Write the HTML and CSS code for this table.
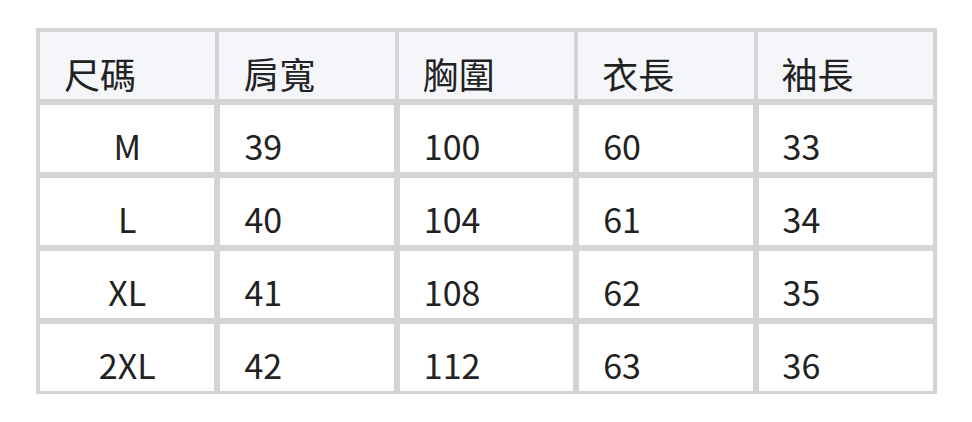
FILE: index.html
```html
<!DOCTYPE html>
<html lang="zh-Hant">
<head>
<meta charset="utf-8">
<link rel="stylesheet" href="styles.css">
</head>
<body>
<div class="size-table">
  <div class="cell head">尺碼</div>
  <div class="cell head">肩寬</div>
  <div class="cell head">胸圍</div>
  <div class="cell head">衣長</div>
  <div class="cell head">袖長</div>

  <div class="cell size">M</div>
  <div class="cell">39</div>
  <div class="cell">100</div>
  <div class="cell">60</div>
  <div class="cell last">33</div>

  <div class="cell size">L</div>
  <div class="cell">40</div>
  <div class="cell">104</div>
  <div class="cell">61</div>
  <div class="cell last">34</div>

  <div class="cell size">XL</div>
  <div class="cell">41</div>
  <div class="cell">108</div>
  <div class="cell">62</div>
  <div class="cell last">35</div>

  <div class="cell size bottom">2XL</div>
  <div class="cell bottom">42</div>
  <div class="cell bottom">112</div>
  <div class="cell bottom">63</div>
  <div class="cell last bottom">36</div>
</div>
</body>
</html>
```

FILE: styles.css
```css
html, body {
  margin: 0;
  padding: 0;
  background: #ffffff;
}

body {
  font-family: "Noto Sans CJK TC", "Noto Sans", sans-serif;
  color: #222222;
}

.size-table {
  display: grid;
  grid-template-columns: repeat(5, 1fr);
  width: 901px;
  box-sizing: border-box;
  margin: 28px 0 0 36px;
  padding: 2px 2px 1px 2px;
  background: #d4d4d4;
}

.cell {
  display: flex;
  align-items: flex-end;
  height: 67px;
  box-sizing: border-box;
  margin: 3px;
  padding: 0 0 9px 24px;
  background: #ffffff;
  font-size: 34px;
  line-height: 34px;
  white-space: nowrap;
}

.cell.head {
  margin: 2px 2px 3px 2px;
  background: #f5f6fa;
  padding-bottom: 8px;
  font-size: 36px;
  line-height: 36px;
}

.cell.size {
  margin-left: 2px;
  justify-content: center;
  padding-left: 0;
}

.cell.last {
  margin-right: 2px;
}

.cell.bottom {
  margin-bottom: 2px;
}
```
